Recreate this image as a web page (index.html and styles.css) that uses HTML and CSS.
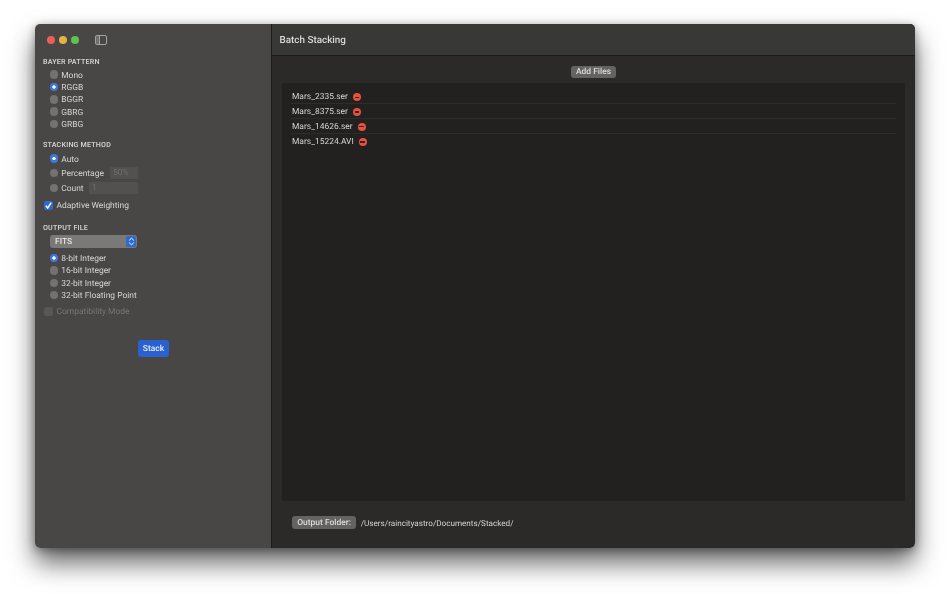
FILE: index.html
```html
<!DOCTYPE html>
<html lang="en">
<head>
<meta charset="utf-8">
<title>Batch Stacking</title>
<link rel="stylesheet" href="styles.css">
</head>
<body>
<div class="window">
  <aside class="sidebar">
    <div class="titlebar">
      <span class="light red"></span><span class="light yellow"></span><span class="light green"></span>
      <svg class="sidebar-icon" width="12" height="10" viewBox="0 0 12 10"><rect x="0.5" y="0.5" width="11" height="9" rx="1.5" fill="none" stroke="#a5a4a3"/><rect x="1" y="1" width="3" height="8" fill="#706f6e"/><path d="M4.5 0.5v9" stroke="#a5a4a3"/></svg>
    </div>
    <h2 class="heading first">BAYER PATTERN</h2>
    <div class="group">
      <div class="opt"><span class="radio"></span>Mono</div>
      <div class="opt"><span class="radio on"></span>RGGB</div>
      <div class="opt"><span class="radio"></span>BGGR</div>
      <div class="opt"><span class="radio"></span>GBRG</div>
      <div class="opt"><span class="radio"></span>GRBG</div>
    </div>
    <h2 class="heading second">STACKING METHOD</h2>
    <div class="group stacking">
      <div class="opt tall-a"><span class="radio on"></span>Auto</div>
      <div class="opt tall-b"><span class="radio"></span>Percentage<span class="field pct">50%</span></div>
      <div class="opt tall-b"><span class="radio"></span>Count<span class="field cnt">1</span></div>
    </div>
    <div class="check-row adaptive"><span class="check on"><svg width="9" height="9" viewBox="0 0 9 9"><path d="M1.8 4.8 3.7 7 7.2 1.6" fill="none" stroke="#fff" stroke-width="1.4"/></svg></span>Adaptive Weighting</div>
    <h2 class="heading third">OUTPUT FILE</h2>
    <div class="select">FITS<span class="stepper"><svg width="7" height="9" viewBox="0 0 7 9"><path d="M1.2 3.4 3.5 1.2 5.8 3.4M1.2 5.6 3.5 7.8 5.8 5.6" fill="none" stroke="#fff" stroke-width="1"/></svg></span></div>
    <div class="group output">
      <div class="opt"><span class="radio on"></span>8-bit Integer</div>
      <div class="opt"><span class="radio"></span>16-bit Integer</div>
      <div class="opt"><span class="radio"></span>32-bit Integer</div>
      <div class="opt"><span class="radio"></span>32-bit Floating Point</div>
    </div>
    <div class="check-row compat"><span class="check"></span>Compatibility Mode</div>
    <div class="stack-wrap"><button class="stack">Stack</button></div>
  </aside>
  <main class="main">
    <header class="header">Batch Stacking</header>
    <div class="toolbar"><button class="btn add">Add Files</button></div>
    <section class="list">
      <div class="row"><span class="name">Mars_2335.ser</span><span class="remove"></span></div>
      <div class="row"><span class="name">Mars_8375.ser</span><span class="remove"></span></div>
      <div class="row"><span class="name">Mars_14626.ser</span><span class="remove"></span></div>
      <div class="row last"><span class="name">Mars_15224.AVI</span><span class="remove"></span></div>
    </section>
    <footer class="footer"><button class="btn">Output Folder:</button><span class="path">/Users/raincityastro/Documents/Stacked/</span></footer>
  </main>
</div>
</body>
</html>
```
FILE: styles.css
```css
* { box-sizing: border-box; }
html, body { margin: 0; height: 100%; background: #fff; overflow: hidden; }
body { padding: 24px 35px 46px; font-family: Roboto, "Liberation Sans", sans-serif; font-size: 8.45px; color: #d6d5d4; text-rendering: geometricPrecision; }
.window {
  display: flex; height: 524px; border-radius: 5px; overflow: hidden;
  box-shadow: 0 15px 26px rgba(0,0,0,.6), 0 2px 10px rgba(0,0,0,.35), inset 0 0 0 1px rgba(255,255,255,.12);
  filter: blur(.3px);
}
.sidebar { width: 237px; flex: none; background: #484746; padding: 0 0 0 8px; border-right: 1px solid #1c1c1b; }
.titlebar { display: flex; align-items: center; height: 31px; padding-left: 3.5px; }
.light { width: 8px; height: 8px; border-radius: 50%; margin-right: 4.4px; }
.red { background: #ec5f57; } .yellow { background: #e4b33f; } .green { background: #5fc350; }
.sidebar-icon { margin-left: 11px; }
.heading { margin: 0; font-size: 7.1px; line-height: 9px; font-weight: 600; letter-spacing: .2px; color: #d0cfce; }
.heading.first { margin-top: 2px; }
.heading.second { margin-top: 9px; }
.heading.third { margin-top: 10px; }
.group { width: 95px; padding-left: 7px; margin-top: 3.5px; }
.opt { display: flex; align-items: center; height: 12.35px; }
.tall-a { height: 14px; }
.tall-b { height: 15px; }
.stacking .tall-a { height: 13.7px; }
.radio { width: 8.5px; height: 8.5px; border-radius: 50%; background: #737271; margin: 0 3px 2px -.25px; flex: none; }
.radio.on { background: radial-gradient(circle, #fff 0 1.4px, #3c78e0 1.9px); }
.field { height: 12px; background: #525150; color: #6f6e6d; padding: 0 3px; line-height: 12px; margin: 0 0 1px auto; flex: none; }
.pct { width: 28px; }
.cnt { width: 49px; }
.check-row { display: flex; align-items: center; height: 14px; }
.adaptive { margin-top: 2.5px; }
.check { width: 9px; height: 9px; border-radius: 2px; background: #5f5e5d; margin: 0 3.5px 1px 1px; display: flex; align-items: center; justify-content: center; flex: none; }
.check.on { background: #2f6ad0; }
.compat { margin-top: 2.5px; color: #777675; }
.compat .check { background: #585756; }
.select {
  display: flex; align-items: center; justify-content: space-between;
  width: 87px; height: 12.5px; margin: 3.5px 0 0 7px; padding: 0 1px 0 5px;
  background: #7a7978; border-radius: 3px; color: #e5e4e3; font-weight: 500;
}
.stepper { width: 10px; height: 10.5px; border-radius: 2px; background: #2f6ad0; display: flex; align-items: center; justify-content: center; }
.output { width: auto; margin-top: 5px; }
.stack-wrap { padding-left: 95px; margin-top: 21px; }
.stack { display: block; width: 31px; height: 17px; border: 0; border-radius: 3px; padding: 1px 0 0; background: #2b60d0; color: #e8eefb; font: 500 8.45px Roboto, "Liberation Sans", sans-serif; text-rendering: geometricPrecision; }
.main { flex: 1; display: flex; flex-direction: column; background: #2b2a29; min-width: 0; }
.header { height: 32px; line-height: 33px; padding-left: 7.5px; background: #383837; border-bottom: 1px solid #1b1b1a; font-size: 9.9px; font-weight: 500; color: #dcdbda; }
.toolbar { display: flex; justify-content: center; align-items: center; height: 27px; padding-top: 4.5px; }
.btn { height: 12.5px; padding: 1px 5.3px 0; border: 0; border-radius: 3px; background: #646362; color: #dddcdb; font: 500 8.45px Roboto, "Liberation Sans", sans-serif; text-rendering: geometricPrecision; }
.btn.add { padding: 1px 4.5px 0; }
.list { height: 418px; margin: 0 10px; background: #222120; padding: 6.5px 9px 0; }
.row { display: flex; align-items: center; height: 14.7px; padding-top: 2px; border-bottom: 1px solid #2e2d2c; }
.row.last { border-bottom: 0; }
.name { padding-left: 1px; }
.remove { position: relative; width: 8px; height: 8px; border-radius: 50%; background: #e8503f; margin-left: 5px; }
.remove::after { content: ""; position: absolute; left: 1.7px; right: 1.7px; top: 3.3px; height: 1.4px; background: #3a2220; }
.footer { display: flex; align-items: center; height: 31px; padding: 12px 0 0 20px; }
.path { margin-left: 4.5px; font-size: 8.15px; color: #d6d5d4; }
```
